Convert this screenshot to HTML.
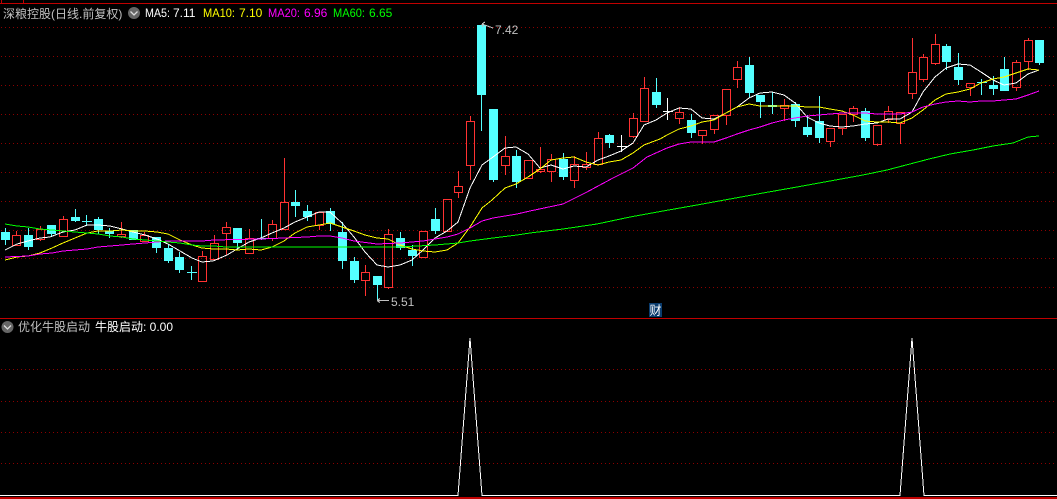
<!DOCTYPE html>
<html lang="zh-CN">
<head>
<meta charset="utf-8">
<title>深粮控股</title>
<style>
html,body{margin:0;padding:0;background:#000;width:1057px;height:499px;overflow:hidden}
svg{display:block}
text{font-family:"Liberation Sans","WenQuanYi Zen Hei","Noto Sans CJK SC",sans-serif;font-size:12px}
</style>
</head>
<body>
<svg width="1057" height="499" viewBox="0 0 1057 499" xmlns="http://www.w3.org/2000/svg">
<rect width="1057" height="499" fill="#000"/>
<g shape-rendering="crispEdges" fill="none">
<path d="M1 27.5H1057M1 56.5H1057M1 85.5H1057M1 114.5H1057M1 143.5H1057M1 172.5H1057M1 201.5H1057M1 230.5H1057M1 258.5H1057M1 287.5H1057M1 369.5H1057M1 401.5H1057M1 432.5H1057M1 463.5H1057" stroke="#8c0000" stroke-dasharray="1 3"/>
<path d="M0 3.5H1057M1.5 0V3M23.5 0V3M0 318.5H1057" stroke="#c00000"/>
<rect x="0" y="497" width="1057" height="2" fill="#c00000" stroke="none"/>
<!-- cyan wicks -->
<path stroke="#54ffff" d="M5.5 228V245M28.5 228V250M51.5 225V236M75.5 209V222M86.5 215V226M82 221.5H92M98.5 217V234M109.5 228V238M133.5 230V240M156.5 237V253M168.5 244V263M179.5 252V273M191.5 266V280M187 272.5H197M237.5 228V250M261.5 219V240M257 238.5H267M295.5 190V217M307.5 205V221M330.5 208V231M342.5 222V269M354.5 257V283M377.5 276V301M400.5 232V250M412.5 245V266M435.5 208V234M481.5 25V131M493.5 109V182M516.5 150V188M563.5 153V180M609.5 134V148M656.5 78V108M691.5 114V138M749.5 57V98M760.5 95V118M772.5 92V114M795.5 102V127M807.5 115V137M819.5 96V143M865.5 108V141M946.5 44V70M958.5 53V85M981.5 79V95M977 82.5H987M993.5 76V95M1004.5 57V91M1039.5 40V65"/>
<path stroke="#fff" d="M621.5 135V152M617 146.5H627M667.5 98V120M663 111.5H673"/>
<!-- cyan bodies -->
<path fill="#54ffff" d="M1 232h9v8h-9zM24 235h9v12h-9zM47 225h9v9h-9zM71 217h9v4h-9zM94 219h9v11h-9zM105 231h9v3h-9zM129 230h9v10h-9zM152 237h9v11h-9zM164 248h9v13h-9zM175 257h9v13h-9zM233 228h9v15h-9zM291 202h9v4h-9zM303 211h9v6h-9zM326 211h9v13h-9zM338 232h9v29h-9zM350 261h9v19h-9zM373 276h9v9h-9zM396 238h9v10h-9zM408 250h9v6h-9zM431 219h9v12h-9zM477 25h9v70h-9zM489 109h9v71h-9zM512 156h9v26h-9zM559 159h9v18h-9zM605 135h9v8h-9zM652 92h9v13h-9zM687 120h9v13h-9zM745 65h9v28h-9zM756 95h9v7h-9zM768 105h9v2h-9zM791 104h9v17h-9zM803 127h9v8h-9zM815 121h9v17h-9zM861 111h9v27h-9zM942 46h9v16h-9zM954 67h9v13h-9zM989 85h9v4h-9zM1000 69h9v22h-9zM1035 40h9v23h-9z"/>
<!-- red wicks -->
<path stroke="#ff3232" d="M16.5 231V235M40.5 226V229M40.5 239V241M63.5 216V219M121.5 222V234M121.5 236V238M144.5 232V235M144.5 241V242M202.5 251V256M214.5 235V243M226.5 222V227M226.5 233V255M249.5 229V238M272.5 220V224M272.5 238V241M284.5 158V202M319.5 225V230M365.5 265V272M365.5 280V296M388.5 229V234M388.5 287V289M458.5 171V186M458.5 192V198M470.5 116V121M470.5 165V180M505.5 136V156M505.5 165V175M540.5 147V169M540.5 171V173M551.5 154V159M551.5 171V182M574.5 156V164M574.5 180V188M586.5 152V164M586.5 167V170M598.5 132V138M633.5 113V118M633.5 136V138M644.5 77V88M679.5 107V112M679.5 118V124M702.5 135V144M714.5 129V134M726.5 115V125M737.5 61V67M737.5 79V88M784.5 99V105M784.5 108V121M830.5 141V147M842.5 128V135M853.5 106V108M853.5 114V122M877.5 144V146M888.5 106V111M888.5 119V123M900.5 123V144M912.5 38V72M912.5 93V99M923.5 54V57M923.5 79V82M935.5 34V44M935.5 63V65M970.5 87V96M1016.5 60V62M1016.5 87V91M1028.5 38V40M1028.5 61V70"/>
<!-- red bodies -->
<path stroke="#ff3232" d="M12.5 235.5h8v10h-8zM36.5 229.5h8v10h-8zM59.5 219.5h8v17h-8zM117.5 234.5h8v2h-8zM140.5 235.5h8v6h-8zM198.5 256.5h8v25h-8zM210.5 243.5h8v16h-8zM222.5 227.5h8v6h-8zM245.5 238.5h8v15h-8zM268.5 224.5h8v14h-8zM280.5 202.5h8v27h-8zM315.5 212.5h8v13h-8zM361.5 272.5h8v8h-8zM384.5 234.5h8v53h-8zM419.5 231.5h8v26h-8zM443.5 199.5h8v32h-8zM454.5 186.5h8v6h-8zM466.5 121.5h8v44h-8zM501.5 156.5h8v9h-8zM524.5 160.5h8v18h-8zM536.5 169.5h8v2h-8zM547.5 159.5h8v12h-8zM570.5 164.5h8v16h-8zM582.5 164.5h8v3h-8zM594.5 138.5h8v26h-8zM629.5 118.5h8v18h-8zM640.5 88.5h8v33h-8zM675.5 112.5h8v6h-8zM698.5 130.5h8v5h-8zM710.5 115.5h8v14h-8zM722.5 89.5h8v26h-8zM733.5 67.5h8v12h-8zM780.5 105.5h8v3h-8zM826.5 128.5h8v13h-8zM838.5 114.5h8v14h-8zM849.5 108.5h8v6h-8zM873.5 125.5h8v19h-8zM884.5 111.5h8v8h-8zM896.5 112.5h8v11h-8zM908.5 72.5h8v21h-8zM919.5 57.5h8v22h-8zM931.5 44.5h8v19h-8zM966.5 83.5h8v4h-8zM1012.5 62.5h8v25h-8zM1024.5 40.5h8v21h-8z"/>
<!-- MA5 -->
<polyline stroke="#fff" points="5,250 17,244 28,241 40,238 50,237 63,232 75,230 87,225 98,225 110,226 122,229 133,232 145,235 157,239 168,244 180,251 192,258 202,262 213,261 227,255 237,249 249,242 261,238 272,233 284,228 295,222 307,217 319,212 330,212 342,223 354,237 365,252 377,265 388,267 400,265 412,260 423,250 435,238 447,231 458,222 470,188 482,165 493,157 505,148 516,147 528,154 540,168 551,165 563,169 574,166 586,167 598,160 609,156 621,151 633,143 644,125 656,120 667,113 679,108 691,109 702,118 714,119 726,113 737,107 749,98 760,93 772,92 784,95 795,103 807,117 819,123 830,126 842,127 853,126 865,124 877,123 888,119 900,119 912,112 923,92 935,77 946,68 958,64 970,65 981,72 993,80 1004,85 1016,83 1028,74 1039,70"/>
<!-- MA10 -->
<polyline stroke="#ff0" points="5,260 17,257 28,256 40,253 52,248 63,243 75,238 87,233 98,231 110,231 122,230 133,231 145,231 157,232 168,234 180,240 192,245 202,248 214,249 226,249 237,250 249,249 261,250 272,247 284,241 295,233 307,227 319,225 330,223 342,227 354,231 365,235 377,238 388,239 400,245 412,249 423,251 435,252 447,250 458,243 470,227 482,208 492,200 505,188 516,184 528,177 540,169 551,160 563,158 574,157 586,162 598,165 609,162 621,160 633,153 644,145 660,139 667,135 679,129 691,126 702,122 714,120 726,113 737,107 749,104 760,106 772,106 784,106 795,106 807,107 819,107 830,109 842,111 853,115 865,121 877,122 888,122 900,123 912,118 923,110 935,100 946,94 958,92 970,89 981,83 993,79 1004,77 1016,73 1028,69 1039,70"/>
<!-- MA20 -->
<polyline stroke="#f0f" points="5,257 28,256 40,254 52,253 63,251 75,250 87,249 98,247 110,246 122,245 133,244 145,243 157,242 168,241 180,241 202,241 214,240 260,239 284,238 307,237 319,236 330,236 342,238 354,241 377,244 400,243 412,242 423,241 435,239 447,237 458,234 470,228 482,221 493,218 505,216 517,214 530,211 563,204 573,199 587,192 600,185 613,178 633,168 647,157 667,148 679,144 691,142 714,142 726,138 737,134 749,130 760,127 772,123 784,120 795,118 807,116 819,115 830,114 842,113 853,113 865,113 877,114 900,114 912,112 923,107 935,104 946,102 958,101 970,102 981,101 993,101 1004,100 1016,99 1028,95 1039,91"/>
<!-- MA60 -->
<polyline stroke="#0f0" points="5,224 17,226 28,227 40,229 52,230 63,231 75,232 87,233 98,234 110,236 122,237 133,239 145,240 157,241 168,242 180,243 192,245 202,246 214,246 226,247 260,247 377,247 400,247 435,245 458,243 470,241 493,238 517,235 530,233 563,229 597,224 630,217 663,211 697,205 730,199 763,193 797,187 830,181 863,175 887,170 929,159 950,154 973,150 993,146 1013,143 1028,137 1039,136"/>
<!-- lower indicator -->
<polyline stroke="#fff" points="0,495.5 458,495.5 470,338 482,495.5 900,495.5 912,338 924,495.5 1057,495.5"/>
<rect x="649" y="303" width="13" height="14" fill="#0a3c6e"/>
<!-- callout arrows -->
<path stroke="#c0c0c0" d="M377 300.5H389M377 300.5l3 -2M377 300.5l3 2M482 24l11 4M482 24l3 -2M482 24l1 3"/>
</g>
<!-- menu icons -->
<circle cx="134" cy="13" r="6" fill="#666"/>
<path d="M130.5 11.5L134 15L137.5 11.5" fill="none" stroke="#ddd" stroke-width="1.3"/>
<circle cx="7.5" cy="327" r="6" fill="#666"/>
<path d="M4 325.5L7.5 329L11 325.5" fill="none" stroke="#ddd" stroke-width="1.3"/>
<!-- labels -->
<text x="3" y="18" fill="#c0c0c0">深粮控股(日线.前复权)</text>
<text x="145" y="17" fill="#fff" textLength="25" lengthAdjust="spacingAndGlyphs">MA5:</text>
<text x="173" y="17" fill="#fff">7.11</text>
<text x="203" y="17" fill="#ff0" textLength="32" lengthAdjust="spacingAndGlyphs">MA10:</text>
<text x="239" y="17" fill="#ff0">7.10</text>
<text x="268" y="17" fill="#f0f" textLength="32" lengthAdjust="spacingAndGlyphs">MA20:</text>
<text x="304" y="17" fill="#f0f">6.96</text>
<text x="333" y="17" fill="#0f0" textLength="32" lengthAdjust="spacingAndGlyphs">MA60:</text>
<text x="369" y="17" fill="#0f0">6.65</text>
<text x="495" y="34" fill="#c0c0c0">7.42</text>
<text x="391" y="306" fill="#c0c0c0">5.51</text>
<text x="18" y="331" fill="#c0c0c0">优化牛股启动</text>
<text x="95" y="331" fill="#fff">牛股启动: 0.00</text>
<text x="649.5" y="314.5" fill="#fff">财</text>
</svg>
</body>
</html>
